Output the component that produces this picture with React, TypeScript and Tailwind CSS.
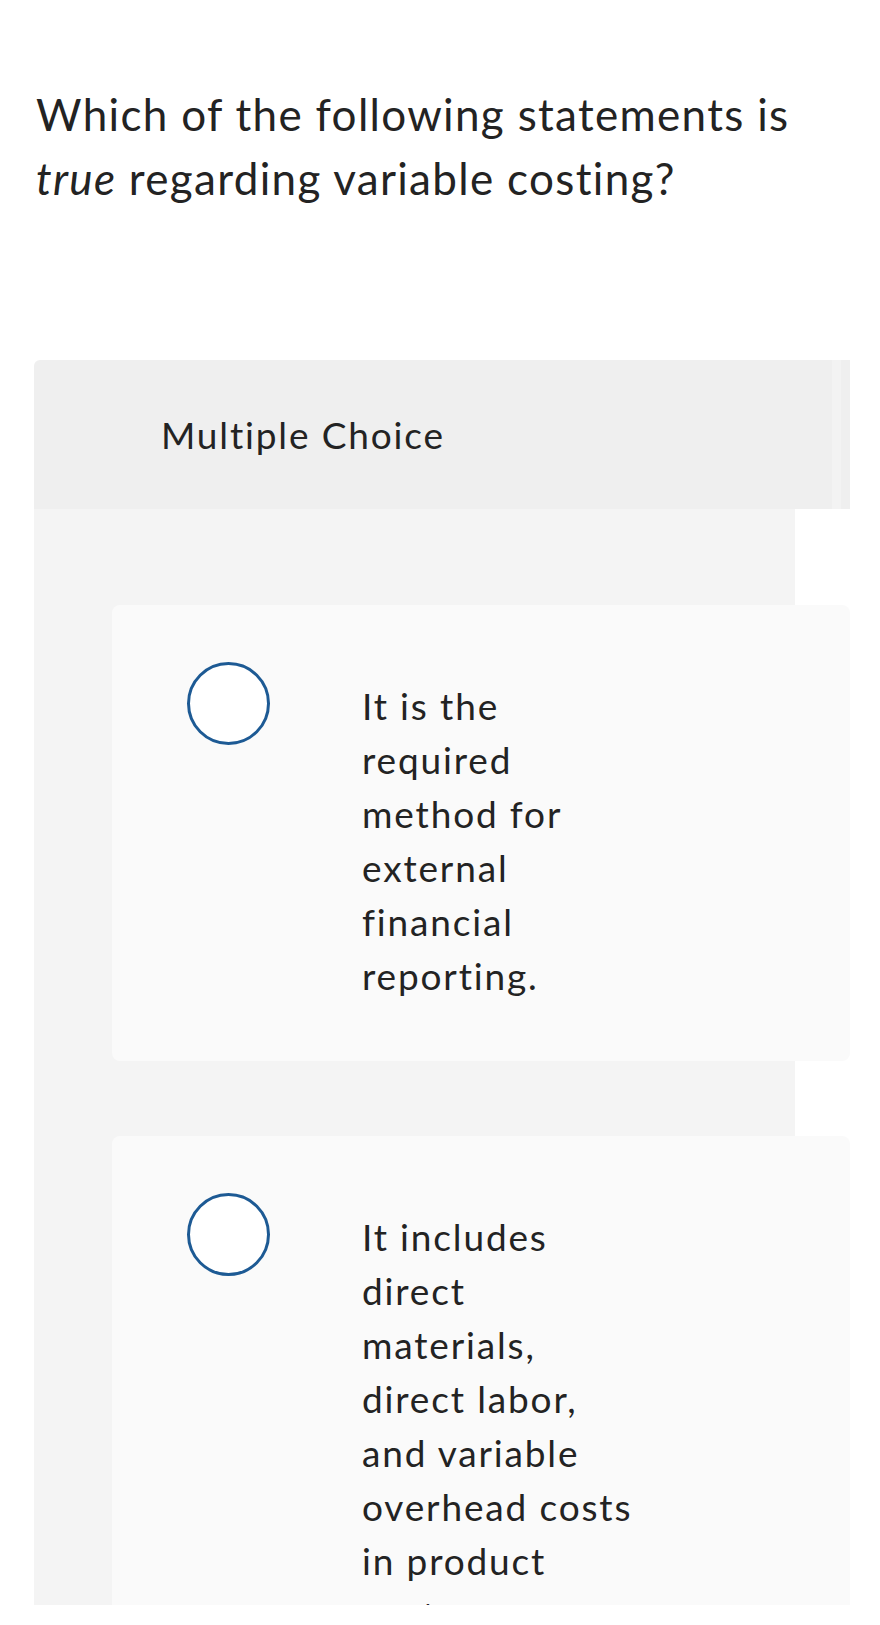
const options = [
  ["It is the", "required", "method for", "external", "financial", "reporting."],
  ["It includes", "direct", "materials,", "direct labor,", "and variable", "overhead costs", "in product", "costs."],
];

function Radio() {
  return <div className="h-[83px] w-[83px] shrink-0 rounded-full border-[3px] border-[#1d5a94] bg-white" />;
}

export default function App() {
  return (
    <div className="h-[1625px] bg-white font-['Lato',sans-serif] text-[#232323] [font-variant-ligatures:none]">
      <div className="pl-[36px] pt-[82px] pr-[30px]">
        <h1 className="text-[44px] leading-[64px] tracking-[0.03em]">
          Which of the following statements is <i>true</i> regarding variable costing?
        </h1>
      </div>

      <div className="ml-[34px] mt-[150px] flex h-[1245px] w-[816px] flex-col overflow-hidden">
        <div className="relative flex h-[149px] shrink-0 items-center rounded-tl-md bg-[#efefef] pl-[127px] text-[37px] tracking-[0.05em]">
          Multiple Choice
          <div className="absolute right-[9px] top-0 h-full w-[9px] bg-[#f3f3f3]" />
        </div>
        <div className="w-[761px] flex-1 bg-[#f4f4f4] pl-[78px] pt-[96px]">
          {options.map((lines, i) => (
            <div key={i} className={i > 0 ? "mt-[75px]" : ""}>
              <div className="flex w-[738px] rounded-lg bg-[#fafafa] pl-[75px] pt-[57px] pb-[58px]">
                <Radio />
                <p className="ml-[92px] mt-[17px] text-[37px] leading-[54px] tracking-[0.05em]">
                  {lines.map((l) => (
                    <span key={l} className="block">{l}</span>
                  ))}
                </p>
              </div>
            </div>
          ))}
        </div>
      </div>
    </div>
  );
}
